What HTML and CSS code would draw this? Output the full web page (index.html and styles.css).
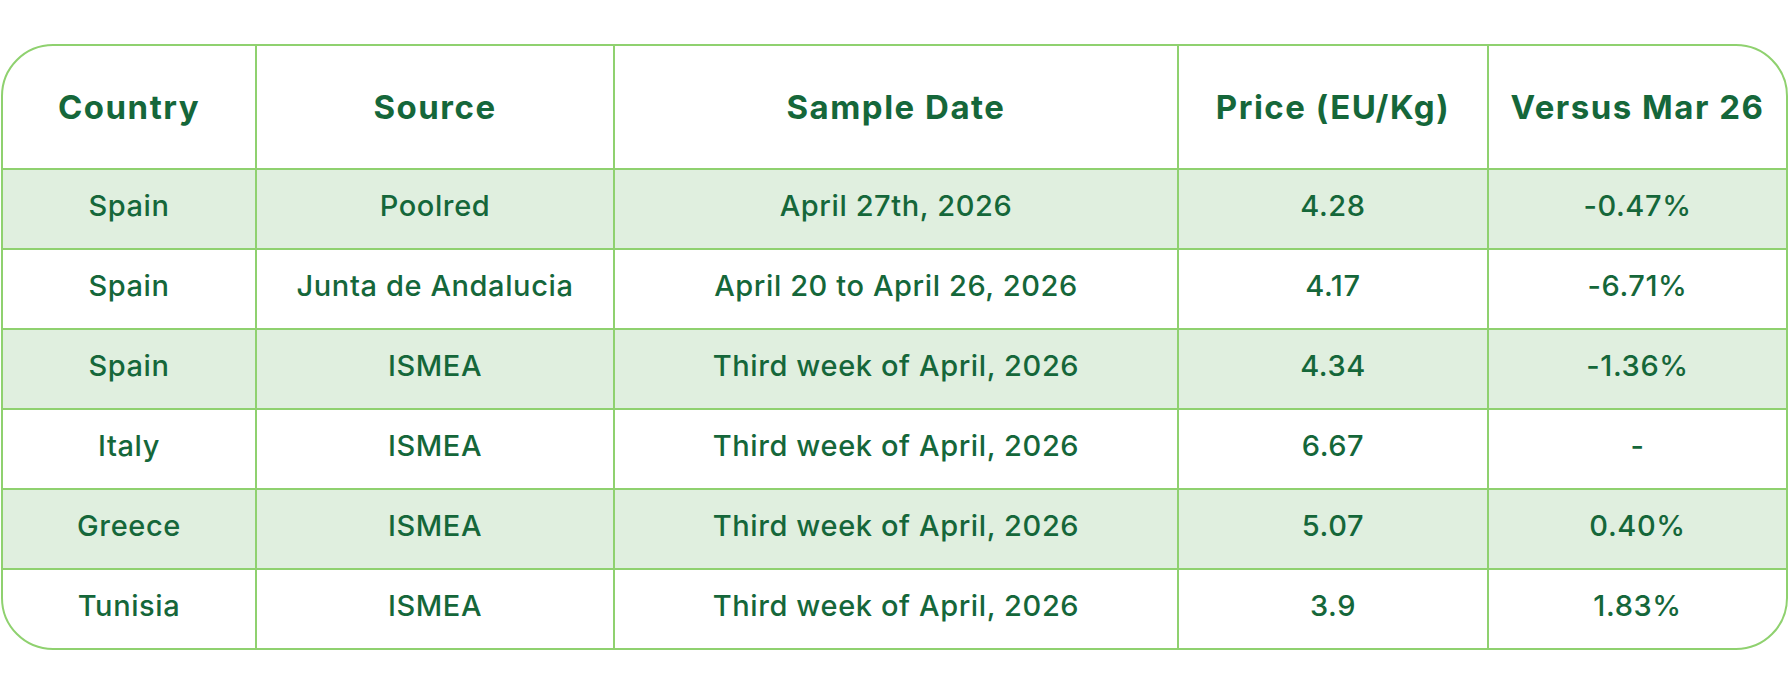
FILE: index.html
```html
<!DOCTYPE html>
<html lang="en">
<head>
<meta charset="utf-8">
<title>Olive oil prices</title>
<link rel="stylesheet" href="styles.css">
</head>
<body>
<div class="page">
  <div class="card">
    <table class="prices">
      <colgroup>
        <col class="c1"><col class="c2"><col class="c3"><col class="c4"><col class="c5">
      </colgroup>
      <thead>
        <tr><th>Country</th><th>Source</th><th>Sample Date</th><th>Price (EU/Kg)</th><th>Versus Mar 26</th></tr>
      </thead>
      <tbody>
        <tr class="alt"><td>Spain</td><td>Poolred</td><td>April 27th, 2026</td><td>4.28</td><td>-0.47%</td></tr>
        <tr><td>Spain</td><td>Junta de Andalucia</td><td>April 20 to April 26, 2026</td><td>4.17</td><td>-6.71%</td></tr>
        <tr class="alt"><td>Spain</td><td>ISMEA</td><td>Third week of April, 2026</td><td>4.34</td><td>-1.36%</td></tr>
        <tr><td>Italy</td><td>ISMEA</td><td>Third week of April, 2026</td><td>6.67</td><td>-</td></tr>
        <tr class="alt"><td>Greece</td><td>ISMEA</td><td>Third week of April, 2026</td><td>5.07</td><td>0.40%</td></tr>
        <tr><td>Tunisia</td><td>ISMEA</td><td>Third week of April, 2026</td><td>3.9</td><td>1.83%</td></tr>
      </tbody>
    </table>
  </div>
</div>
</body>
</html>
```
FILE: styles.css
```css
html, body {
  margin: 0;
  padding: 0;
  background: #ffffff;
}
.page {
  padding: 44px 2px 0 1px;
}
.card {
  border: 2px solid #8fd16f;
  border-radius: 52px;
  overflow: hidden;
  background: #ffffff;
}
.prices {
  width: 100%;
  border-collapse: collapse;
  table-layout: fixed;
  font-family: Inter, "Liberation Sans", sans-serif;
  color: #15673a;
  text-align: center;
}
.c1 { width: 253px; }
.c2 { width: 358px; }
.c3 { width: 564px; }
.c4 { width: 310px; }
.c5 { width: auto; }
.prices th, .prices td {
  border: 2px solid #8fd16f;
  padding: 0 4px;
  white-space: nowrap;
}
.prices tr > :first-child { border-left: none; }
.prices tr > :last-child { border-right: none; }
.prices thead th { border-top: none; }
.prices tbody tr:last-child td { border-bottom: none; }
.prices th {
  height: 122px;
  font-size: 33px;
  font-weight: 700;
  letter-spacing: 1.5px;
}
.prices td {
  height: 70px;
  padding-bottom: 8px;
  font-size: 29px;
  font-weight: 500;
  letter-spacing: 0.6px;
}
.prices tr.alt td {
  background: #e0efdf;
}
```
